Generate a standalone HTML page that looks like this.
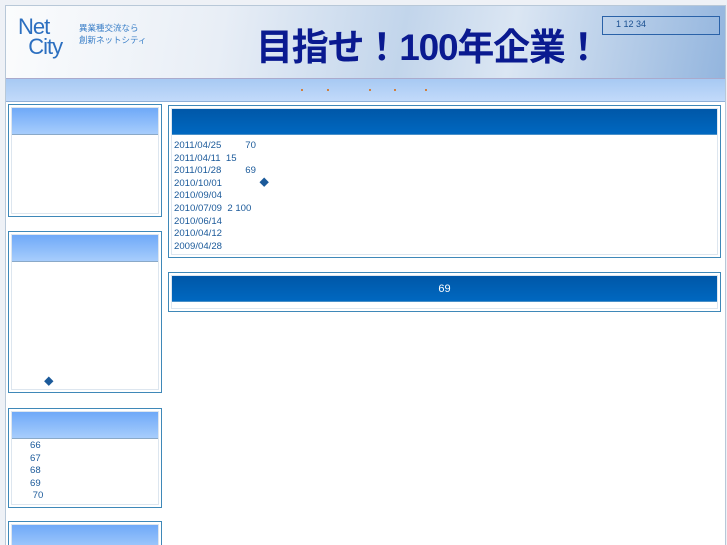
<!DOCTYPE html>
<html><head><meta charset="utf-8"><style>
*{margin:0;padding:0;box-sizing:border-box}
html{width:727px;height:545px;overflow:hidden}
body{width:727px;height:545px;overflow:hidden;background:#eef1f6;font-family:"Liberation Sans","Noto Sans CJK JP",sans-serif;font-size:10px;color:#1b5a9a;position:relative}
.wrap{position:absolute;left:5px;top:5px;width:721px;height:540px;background:#fff;border:1px solid #b8c8d8;border-bottom:none}
.hdr{position:absolute;left:6px;top:6px;width:719px;height:73px;background:linear-gradient(100deg,#fbfcfd 0%,#e8eef6 30%,#c2d5eb 55%,#dbe6f3 70%,#93b5de 100%);border-bottom:1px solid #aac}
.nav{position:absolute;left:6px;top:79px;width:719px;height:23px;background:linear-gradient(#a7c9f3,#c2dafa);border-bottom:1px solid #8fb0d8}
.dot{position:absolute;top:10px;width:2px;height:2px;background:#d08040}
.box{position:absolute;border:1px solid #3f88b8;background:#fff;padding:2px}
.box .in{border:1px solid #dde6ef;height:100%;position:relative}
.lh{height:27px;background:linear-gradient(#6fa9f8,#a7cdfc);border-bottom:1px solid #8aa9c8}
.rh{height:26px;background:linear-gradient(#0057a8,#0068c0);border-bottom:1px solid #4a90c8;color:#fff;text-align:center;line-height:26px;font-size:11px}
.t{position:absolute;line-height:12.6px;font-size:9.6px;color:#1b5a9a}
</style></head><body>
<div class="wrap"></div>
<div class="hdr">
 <div style="position:absolute;left:12px;top:11px;font-size:22px;color:#2c6fc0;line-height:20px;letter-spacing:-1px">Net<br>&nbsp;&nbsp;City</div>
 <div style="position:absolute;left:73px;top:16px;font-size:8.5px;color:#3a7fc8;line-height:12px">異業種交流なら<br>創新ネットシティ</div>
 <div style="position:absolute;left:250px;top:11px;font-size:37px;font-weight:bold;color:#0a1a90;letter-spacing:-1.2px;white-space:nowrap">目指せ！100年企業！</div>
 <div style="position:absolute;left:596px;top:10px;width:118px;height:19px;border:1px solid #2a62a8;font-size:9px;color:#1a4f90;padding:2px 0 0 13px">1 12 34</div>
</div>
<div class="nav">
 <div class="dot" style="left:295px"></div><div class="dot" style="left:321px"></div><div class="dot" style="left:363px"></div><div class="dot" style="left:388px"></div><div class="dot" style="left:419px"></div>
</div>
<div class="box" style="left:8px;top:104px;width:154px;height:113px"><div class="in"><div class="lh"></div></div></div>
<div class="box" style="left:8px;top:231px;width:154px;height:162px"><div class="in"><div class="lh"></div>
 <div class="t" style="left:32px;top:142px">◆</div></div></div>
<div class="box" style="left:8px;top:408px;width:154px;height:100px"><div class="in"><div class="lh"></div>
 <div class="t" style="left:18px;top:28px">66<br>67<br>68<br>69<br>&nbsp;70</div></div></div>
<div class="box" style="left:8px;top:521px;width:154px;height:24px;border-bottom:none;padding-bottom:0"><div class="in" style="border-bottom:none;overflow:hidden"><div class="lh"></div></div></div>
<div class="box" style="left:168px;top:105px;width:553px;height:153px"><div class="in"><div class="rh"></div>
 <div class="t" style="left:2px;top:31px;white-space:pre">2011/04/25         70
2011/04/11  15
2011/01/28         69
2010/10/01              ◆
2010/09/04
2010/07/09  2 100
2010/06/14
2010/04/12
2009/04/28</div></div></div>
<div class="box" style="left:168px;top:272px;width:553px;height:40px"><div class="in"><div class="rh">69</div></div></div>
</body></html>
